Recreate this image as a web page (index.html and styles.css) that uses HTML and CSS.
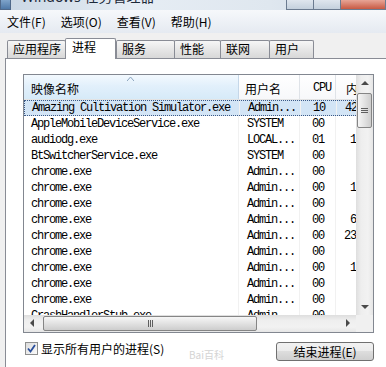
FILE: index.html
```html
<!DOCTYPE html>
<html lang="zh-CN">
<head>
  <meta charset="UTF-8">
  <title>Windows 任务管理器</title>
  <link rel="stylesheet" href="styles.css">
</head>
<body>
  <div class="titlebar">
    <span class="app-icon"></span>
    <span class="title">Windows 任务管理器</span>
    <span class="caption">
      <span class="cap-btn"></span>
      <span class="cap-btn"></span>
      <span class="cap-btn cap-close"></span>
    </span>
  </div>
  <div class="menubar">
    <span class="menu">文件(F)</span>
    <span class="menu">选项(O)</span>
    <span class="menu">查看(V)</span>
    <span class="menu">帮助(H)</span>
  </div>

  <div class="main">
    <div class="tabs">
      <div class="tab tab-apps">应用程序</div>
      <div class="tab tab-proc active">进程</div>
      <div class="tab tab-svc">服务</div>
      <div class="tab tab-perf">性能</div>
      <div class="tab tab-net">联网</div>
      <div class="tab tab-user">用户</div>
    </div>

    <div class="panel">
      <div class="listbox">
        <div class="viewport">
          <div class="row header">
            <div class="c-name sorted">映像名称
              <svg class="sort" width="7" height="4" viewBox="0 0 7 4"><path d="M0 4 L3.5 0 L7 4" fill="none" stroke="#8aa3bd" stroke-width="1"/></svg>
            </div>
            <div class="c-user">用户名</div>
            <div class="c-cpu mono">CPU</div>
            <div class="c-mem">内存(专用工作集)</div>
          </div>
          <div class="row sel"><div class="c-name">Amazing Cultivation Simulator.exe</div><div class="c-user">Admin...</div><div class="c-cpu">10</div><div class="c-mem">42,316 K</div></div>
          <div class="row"><div class="c-name">AppleMobileDeviceService.exe</div><div class="c-user">SYSTEM</div><div class="c-cpu">00</div><div class="c-mem">984 K</div></div>
          <div class="row"><div class="c-name">audiodg.exe</div><div class="c-user">LOCAL...</div><div class="c-cpu">01</div><div class="c-mem">1,240 K</div></div>
          <div class="row"><div class="c-name">BtSwitcherService.exe</div><div class="c-user">SYSTEM</div><div class="c-cpu">00</div><div class="c-mem">756 K</div></div>
          <div class="row"><div class="c-name">chrome.exe</div><div class="c-user">Admin...</div><div class="c-cpu">00</div><div class="c-mem">968 K</div></div>
          <div class="row"><div class="c-name">chrome.exe</div><div class="c-user">Admin...</div><div class="c-cpu">00</div><div class="c-mem">1,152 K</div></div>
          <div class="row"><div class="c-name">chrome.exe</div><div class="c-user">Admin...</div><div class="c-cpu">00</div><div class="c-mem">632 K</div></div>
          <div class="row"><div class="c-name">chrome.exe</div><div class="c-user">Admin...</div><div class="c-cpu">00</div><div class="c-mem">6,428 K</div></div>
          <div class="row"><div class="c-name">chrome.exe</div><div class="c-user">Admin...</div><div class="c-cpu">00</div><div class="c-mem">23,840 K</div></div>
          <div class="row"><div class="c-name">chrome.exe</div><div class="c-user">Admin...</div><div class="c-cpu">00</div><div class="c-mem">904 K</div></div>
          <div class="row"><div class="c-name">chrome.exe</div><div class="c-user">Admin...</div><div class="c-cpu">00</div><div class="c-mem">1,376 K</div></div>
          <div class="row"><div class="c-name">chrome.exe</div><div class="c-user">Admin...</div><div class="c-cpu">00</div><div class="c-mem">812 K</div></div>
          <div class="row"><div class="c-name">chrome.exe</div><div class="c-user">Admin...</div><div class="c-cpu">00</div><div class="c-mem">596 K</div></div>
          <div class="row"><div class="c-name">CrashHandlerStub.exe</div><div class="c-user">Admin...</div><div class="c-cpu">00</div><div class="c-mem">512 K</div></div>
        </div>

        <div class="vscroll">
          <span class="arrow arrow-up"></span>
          <div class="v-track">
            <div class="v-thumb"><span class="grip-h"></span></div>
          </div>
          <span class="arrow arrow-down"></span>
        </div>

        <div class="hscroll">
          <span class="arrow arrow-left"></span>
          <div class="h-track">
            <div class="h-thumb"><span class="grip-v"></span></div>
          </div>
          <span class="arrow arrow-right"></span>
        </div>

        <div class="sb-corner"></div>
      </div>

      <div class="footer">
        <label class="check">
          <span class="box">
            <svg width="9" height="9" viewBox="0 0 9 9"><path d="M1 4.5 L3.5 7.5 L8 1" fill="none" stroke="#2a4f9c" stroke-width="1.8"/></svg>
          </span>
          <span>显示所有用户的进程(S)</span>
        </label>
        <button class="btn">结束进程(E)</button>
      </div>
      <span class="watermark">Bai百科</span>
    </div>
  </div>
</body>
</html>
```

FILE: styles.css
```css
body{
    margin: 0;
    padding: 0;
    background: #f0f0f0;
    font-family: "Noto Sans CJK SC", "Noto Sans", sans-serif;
    font-size: 12px;
    color: #000;
    overflow: hidden;
    height: 367px;
}

/* title bar, only its lower edge is in view */
.titlebar{
    height: 10px;
    overflow: hidden;
    display: flex;
    align-items: flex-start;
    background: linear-gradient(90deg, #c9d6e4, #e6edf4 35%, #dfe7ef 70%, #cdd9e6);
}
.app-icon{
    width: 9px;
    height: 12px;
    margin-top: -4px;
    background: linear-gradient(#8fb2d6, #4f79a8);
    border: 1px solid #50698a;
}
.title{
    margin: -13px 0 0 10px;
    font-family: "Noto Sans", "Noto Sans CJK SC", sans-serif;
    font-size: 14px;
    line-height: 20px;
    color: #1d2a3a;
}
.caption{
    margin-left: auto;
    display: flex;
}
.cap-btn{
    width: 26px;
    height: 9px;
    border: 1px solid #6b7b90;
    border-top: none;
    border-right: none;
    background: linear-gradient(#dfe6ee, #c4d0dd);
}
.cap-close{
    width: 44px;
    border-right: 1px solid #6b7b90;
    background: linear-gradient(#e7a596, #c85a43);
}

.menubar{
    height: 23px;
    display: flex;
    align-items: center;
    padding-left: 7px;
    gap: 15px;
    background: linear-gradient(#f6f8fb, #e5eaf1);
}

.main{
    padding: 5px 0 0 5px;
}

.tabs{
    position: relative;
    z-index: 1;
    display: flex;
    align-items: flex-end;
    height: 20px;
    padding-left: 2px;
}
.tab{
    box-sizing: border-box;
    height: 18px;
    line-height: 16px;
    padding-left: 5px;
    border: 1px solid #898c95;
    border-bottom: none;
    border-radius: 2px 2px 0 0;
    background: linear-gradient(#f6f6f6, #e6e6e6 50%, #d8d8d8);
    margin-right: -1px;
}
.tab.active{
    height: 21px;
    margin: 0 0 -1px 0;
    padding-left: 6px;
    background: #fff;
}
.tab-apps{ width: 59px; }
.tab-proc{ width: 51px; }
.tab-svc{ width: 59px; }
.tab-perf{ width: 47px; }
.tab-net{ width: 50px; }
.tab-user{ width: 45px; }

.panel{
    position: relative;
    height: 293px;
    background: #fff;
    border-top: 1px solid #898c95;
    border-left: 1px solid #898c95;
    padding: 15px 0 0 17px;
}

/* process list: rows + scroll bars in one grid */
.listbox{
    box-sizing: border-box;
    width: 351px;
    height: 259px;
    border: 1px solid #828790;
    display: grid;
    grid-template-columns: 332px 17px;
    grid-template-rows: 240px 17px;
}
.viewport{
    overflow: hidden;
}
.row{
    display: flex;
    width: 380px;
    height: 16px;
    line-height: 16px;
    font-family: "Liberation Mono", monospace;
    font-size: 12px;
    letter-spacing: -1.2px;
    white-space: nowrap;
    box-sizing: border-box;
}
.row > div{
    flex: none;
    box-sizing: border-box;
    overflow: hidden;
    border-right: 1px solid #f1f1f1;
}
.c-name{ width: 215px; padding-left: 7px; }
.c-user{ width: 61px; padding-left: 8px; }
.c-cpu{ width: 36px; padding-left: 12px; }
.c-mem{ width: 63px; text-align: right; padding-right: 6px; }

.row.sel{
    background: #d3e5f6;
    border: 1px dotted #3d5a86;
    line-height: 14px;
}

.row.header{
    height: 25px;
    border-bottom: 1px solid #e3e3e3;
    font-family: "Noto Sans CJK SC", "Noto Sans", sans-serif;
    font-size: 12px;
    letter-spacing: 0;
    background: linear-gradient(#ffffff, #f7f8fa);
}
.row.header > div{
    position: relative;
    padding-top: 3px;
    line-height: 21px;
    border-right: 1px solid #dfe3e8;
}
.row.header .mono{
    font-family: "Liberation Mono", monospace;
    letter-spacing: -1.2px;
    padding-left: 13px;
}
.row.header .c-user{ padding-left: 6px; }
.row.header .c-mem{ text-align: left; padding-left: 10px; }
.row.header .sorted{
    background: linear-gradient(#f3f9fe, #e2f0fb 45%, #d6eaf8);
    border-right-color: #c5d7e8;
}
.sort{
    position: absolute;
    top: 2px;
    left: 103px;
}

/* scroll bars */
.vscroll{
    display: flex;
    flex-direction: column;
    background: linear-gradient(90deg, #dedede, #eeeeee 30%, #f2f2f2 70%, #e6e6e6);
}
.hscroll{
    display: flex;
    background: linear-gradient(#dedede, #eeeeee 30%, #f2f2f2 70%, #e6e6e6);
}
.v-track,
.h-track{
    flex: 1;
}
.sb-corner{
    background: #f0f0f0;
}
.arrow{
    flex: none;
    width: 17px;
    height: 17px;
    position: relative;
}
.arrow::after{
    content: "";
    position: absolute;
    left: 5px;
    top: 6px;
    border: 4px solid transparent;
}
.arrow-up::after{ border-bottom: 4px solid #4a4a4a; border-top: 0; top: 6px; }
.arrow-down::after{ border-top: 4px solid #4a4a4a; border-bottom: 0; top: 7px; }
.arrow-left::after{ border-right: 4px solid #4a4a4a; border-left: 0; left: 6px; top: 4px; }
.arrow-right::after{ border-left: 4px solid #4a4a4a; border-right: 0; left: 7px; top: 4px; }

.v-thumb,
.h-thumb{
    box-sizing: border-box;
    border: 1px solid #858585;
    border-radius: 2px;
    display: flex;
    align-items: center;
    justify-content: center;
}
.v-thumb{
    margin: 1px 1px 0 1px;
    height: 35px;
    background: linear-gradient(90deg, #f6f6f6, #e2e2e2 50%, #cdcdcd);
}
.h-thumb{
    margin: 1px 0 0 2px;
    width: 214px;
    height: 15px;
    background: linear-gradient(#f6f6f6, #e2e2e2 50%, #cdcdcd);
}
.grip-h{
    width: 7px;
    height: 5px;
    border-top: 1px solid #5e5e5e;
    border-bottom: 1px solid #5e5e5e;
    box-sizing: border-box;
    background: linear-gradient(transparent 1px, #5e5e5e 1px, #5e5e5e 2px, transparent 2px);
}
.grip-v{
    width: 5px;
    height: 7px;
    border-left: 1px solid #5e5e5e;
    border-right: 1px solid #5e5e5e;
    box-sizing: border-box;
    background: linear-gradient(90deg, transparent 1px, #5e5e5e 1px, #5e5e5e 2px, transparent 2px);
}

/* bottom row */
.footer{
    width: 351px;
    margin-top: 9px;
    display: flex;
    align-items: flex-start;
    justify-content: space-between;
}
.check{
    display: flex;
    align-items: center;
    gap: 3px;
    margin-left: 2px;
    line-height: 13px;
}
.box{
    box-sizing: border-box;
    width: 13px;
    height: 13px;
    border: 1px solid #8e8f8f;
    background: linear-gradient(135deg, #dcdcdc, #fbfbfb);
    display: flex;
    align-items: center;
    justify-content: center;
}
.btn{
    box-sizing: border-box;
    width: 98px;
    height: 19px;
    padding: 0;
    border: 1px solid #707070;
    border-radius: 3px;
    background: linear-gradient(#f2f2f2, #ebebeb 50%, #dddddd 50%, #cfcfcf);
    font-family: "Noto Sans CJK SC", "Noto Sans", sans-serif;
    font-size: 12px;
    line-height: 17px;
    color: #000;
}
.watermark{
    position: absolute;
    left: 183px;
    top: 288px;
    font-size: 10px;
    color: #d4d4d4;
}
```
